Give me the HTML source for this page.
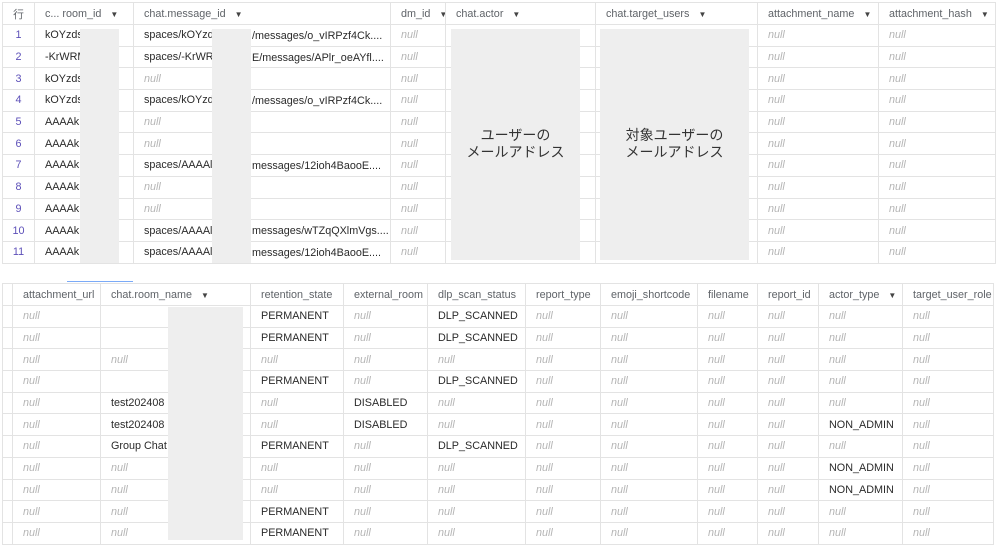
<!DOCTYPE html>
<html><head><meta charset="utf-8"><style>
body{margin:0;width:1000px;height:548px;background:#fff;position:relative;overflow:hidden;font-family:"Liberation Sans","Noto Sans CJK JP",sans-serif;}
table{position:absolute;border-collapse:collapse;table-layout:fixed;font-size:10.8px;color:#2a2a2a;}
td,th{border:1px solid #e3e3e3;padding:0 0 0 10px;white-space:nowrap;overflow:hidden;text-align:left;font-weight:normal;position:relative;vertical-align:middle;}
th{color:#5f6368;height:21px;}
td{height:20.7px;}
.n{color:#b5b5b5;font-style:italic;}
.r{color:#5c4fb8;text-align:center;padding:0;}
.a{font-size:8px;color:#444;margin-left:6px}
.s2{position:absolute;left:118px;top:5px}
.g{position:absolute;background:#eeeeee;}
.jp{position:absolute;font-size:14px;color:#333;text-align:center;line-height:17px;}
</style></head><body>
<table style="left:2px;top:2px;width:993px">
<colgroup><col style="width:32px"><col style="width:99px"><col style="width:257px"><col style="width:55px"><col style="width:150px"><col style="width:162px"><col style="width:121px"><col style="width:117px"></colgroup>
<tr><th class="r" style="color:#5f6368">行</th><th>c... room_id <span class="a">▼</span></th><th>chat.message_id <span class="a">▼</span></th><th>dm_id <span class="a">▼</span></th><th>chat.actor <span class="a">▼</span></th><th>chat.target_users <span class="a">▼</span></th><th>attachment_name <span class="a">▼</span></th><th>attachment_hash <span class="a">▼</span></th></tr>
<tr><td class="r">1</td><td>kOYzds</td><td>spaces/kOYzd<span class="s2">/messages/o_vIRPzf4Ck....</span></td><td class="n">null</td><td></td><td></td><td class="n">null</td><td class="n">null</td></tr>
<tr><td class="r">2</td><td>-KrWRM</td><td>spaces/-KrWR<span class="s2">E/messages/APlr_oeAYfl....</span></td><td class="n">null</td><td></td><td></td><td class="n">null</td><td class="n">null</td></tr>
<tr><td class="r">3</td><td>kOYzds</td><td class="n">null</td><td class="n">null</td><td></td><td></td><td class="n">null</td><td class="n">null</td></tr>
<tr><td class="r">4</td><td>kOYzds</td><td>spaces/kOYzd<span class="s2">/messages/o_vIRPzf4Ck....</span></td><td class="n">null</td><td></td><td></td><td class="n">null</td><td class="n">null</td></tr>
<tr><td class="r">5</td><td>AAAAk.</td><td class="n">null</td><td class="n">null</td><td></td><td></td><td class="n">null</td><td class="n">null</td></tr>
<tr><td class="r">6</td><td>AAAAk.</td><td class="n">null</td><td class="n">null</td><td></td><td></td><td class="n">null</td><td class="n">null</td></tr>
<tr><td class="r">7</td><td>AAAAk.</td><td>spaces/AAAAl<span class="s2">messages/12ioh4BaooE....</span></td><td class="n">null</td><td></td><td></td><td class="n">null</td><td class="n">null</td></tr>
<tr><td class="r">8</td><td>AAAAk.</td><td class="n">null</td><td class="n">null</td><td></td><td></td><td class="n">null</td><td class="n">null</td></tr>
<tr><td class="r">9</td><td>AAAAk.</td><td class="n">null</td><td class="n">null</td><td></td><td></td><td class="n">null</td><td class="n">null</td></tr>
<tr><td class="r">10</td><td>AAAAk.</td><td>spaces/AAAAl<span class="s2">messages/wTZqQXlmVgs....</span></td><td class="n">null</td><td></td><td></td><td class="n">null</td><td class="n">null</td></tr>
<tr><td class="r">11</td><td>AAAAk.</td><td>spaces/AAAAl<span class="s2">messages/12ioh4BaooE....</span></td><td class="n">null</td><td></td><td></td><td class="n">null</td><td class="n">null</td></tr>
</table>
<div class="g" style="left:80px;top:29px;width:39px;height:234px"></div>
<div class="g" style="left:212px;top:29px;width:39px;height:234px"></div>
<div class="g" style="left:451px;top:29px;width:129px;height:231px"></div>
<div class="g" style="left:600px;top:29px;width:149px;height:231px"></div>
<div class="jp" style="left:451px;top:127px;width:129px">ユーザーの<br>メールアドレス</div>
<div class="jp" style="left:600px;top:127px;width:149px">対象ユーザーの<br>メールアドレス</div>
<div style="position:absolute;left:67px;top:281px;width:66px;height:1px;background:#7baaf7"></div>
<table style="left:2px;top:283px;width:991px">
<colgroup><col style="width:10px"><col style="width:88px"><col style="width:150px"><col style="width:93px"><col style="width:84px"><col style="width:98px"><col style="width:75px"><col style="width:97px"><col style="width:60px"><col style="width:61px"><col style="width:84px"><col style="width:91px"></colgroup>
<tr><th style="padding:0"></th><th>attachment_url</th><th>chat.room_name <span class="a">▼</span></th><th>retention_state</th><th>external_room</th><th>dlp_scan_status</th><th>report_type</th><th>emoji_shortcode</th><th>filename</th><th>report_id</th><th>actor_type <span class="a">▼</span></th><th>target_user_role</th></tr>
<tr><td></td><td class="n">null</td><td></td><td>PERMANENT</td><td class="n">null</td><td>DLP_SCANNED</td><td class="n">null</td><td class="n">null</td><td class="n">null</td><td class="n">null</td><td class="n">null</td><td class="n">null</td></tr>
<tr><td></td><td class="n">null</td><td></td><td>PERMANENT</td><td class="n">null</td><td>DLP_SCANNED</td><td class="n">null</td><td class="n">null</td><td class="n">null</td><td class="n">null</td><td class="n">null</td><td class="n">null</td></tr>
<tr><td></td><td class="n">null</td><td class="n">null</td><td class="n">null</td><td class="n">null</td><td class="n">null</td><td class="n">null</td><td class="n">null</td><td class="n">null</td><td class="n">null</td><td class="n">null</td><td class="n">null</td></tr>
<tr><td></td><td class="n">null</td><td></td><td>PERMANENT</td><td class="n">null</td><td>DLP_SCANNED</td><td class="n">null</td><td class="n">null</td><td class="n">null</td><td class="n">null</td><td class="n">null</td><td class="n">null</td></tr>
<tr><td></td><td class="n">null</td><td>test202408</td><td class="n">null</td><td>DISABLED</td><td class="n">null</td><td class="n">null</td><td class="n">null</td><td class="n">null</td><td class="n">null</td><td class="n">null</td><td class="n">null</td></tr>
<tr><td></td><td class="n">null</td><td>test202408</td><td class="n">null</td><td>DISABLED</td><td class="n">null</td><td class="n">null</td><td class="n">null</td><td class="n">null</td><td class="n">null</td><td>NON_ADMIN</td><td class="n">null</td></tr>
<tr><td></td><td class="n">null</td><td>Group Chat</td><td>PERMANENT</td><td class="n">null</td><td>DLP_SCANNED</td><td class="n">null</td><td class="n">null</td><td class="n">null</td><td class="n">null</td><td class="n">null</td><td class="n">null</td></tr>
<tr><td></td><td class="n">null</td><td class="n">null</td><td class="n">null</td><td class="n">null</td><td class="n">null</td><td class="n">null</td><td class="n">null</td><td class="n">null</td><td class="n">null</td><td>NON_ADMIN</td><td class="n">null</td></tr>
<tr><td></td><td class="n">null</td><td class="n">null</td><td class="n">null</td><td class="n">null</td><td class="n">null</td><td class="n">null</td><td class="n">null</td><td class="n">null</td><td class="n">null</td><td>NON_ADMIN</td><td class="n">null</td></tr>
<tr><td></td><td class="n">null</td><td class="n">null</td><td>PERMANENT</td><td class="n">null</td><td class="n">null</td><td class="n">null</td><td class="n">null</td><td class="n">null</td><td class="n">null</td><td class="n">null</td><td class="n">null</td></tr>
<tr><td></td><td class="n">null</td><td class="n">null</td><td>PERMANENT</td><td class="n">null</td><td class="n">null</td><td class="n">null</td><td class="n">null</td><td class="n">null</td><td class="n">null</td><td class="n">null</td><td class="n">null</td></tr>
</table>
<div class="g" style="left:168px;top:307px;width:75px;height:233px"></div>
</body></html>
